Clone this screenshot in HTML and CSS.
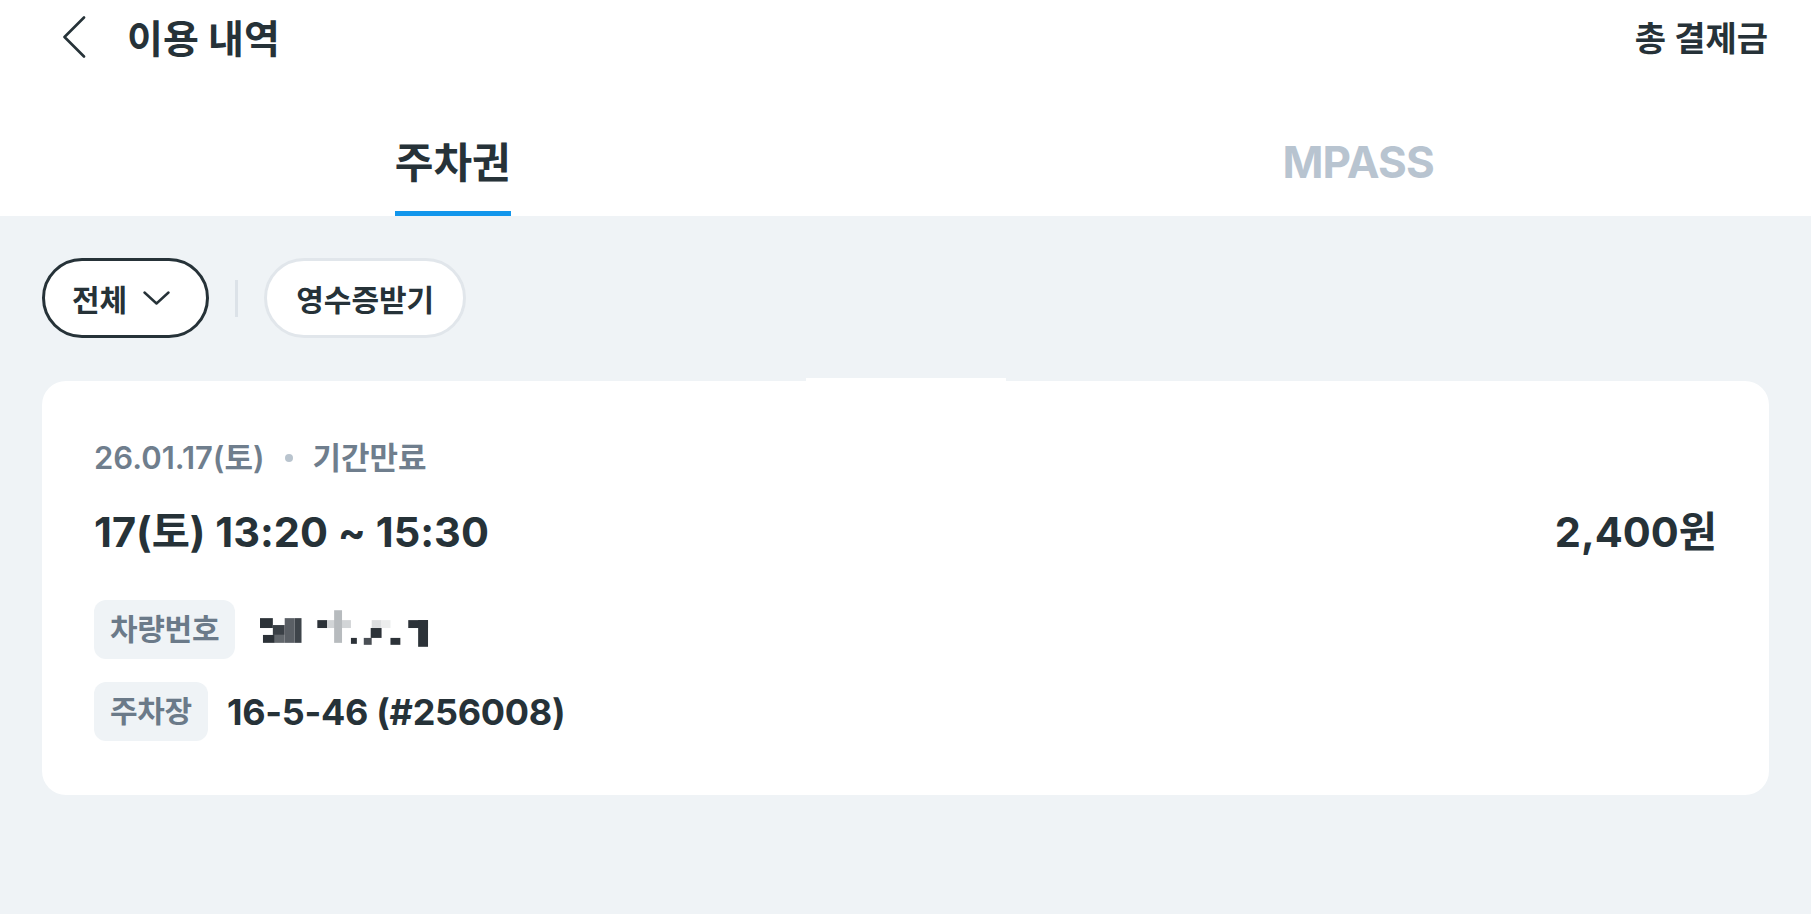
FILE: index.html
```html
<!DOCTYPE html>
<html lang="ko">
<head>
<meta charset="utf-8">
<title>이용 내역</title>
<link rel="stylesheet" href="styles.css">
</head>
<body>
<div class="app">
  <header class="topbar">
    <div class="topbar-left">
      <button class="back" aria-label="뒤로">
        <svg width="24" height="42" viewBox="0 0 24 42"><path d="M22 1.5 L2.5 21 L22 40.5" fill="none" stroke="#263238" stroke-width="2.6" stroke-linecap="round" stroke-linejoin="round"/></svg>
      </button>
      <h1 class="title">이용 내역</h1>
    </div>
    <div class="total">총 결제금</div>
  </header>

  <nav class="tabs">
    <div class="tab active"><span class="tab-label">주차권</span></div>
    <div class="tab"><span class="tab-label latin">MPASS</span></div>
  </nav>

  <main class="content">
    <div class="filters">
      <button class="chip chip-dark">전체
        <svg class="chev" width="27" height="14" viewBox="0 0 27 14"><path d="M1.5 1.5 L13.5 12.5 L25.5 1.5" fill="none" stroke="#263238" stroke-width="2.4" stroke-linecap="round" stroke-linejoin="round"/></svg>
      </button>
      <span class="divider"></span>
      <button class="chip chip-light">영수증받기</button>
    </div>

    <section class="card">
      <div class="notch"></div>
      <div class="meta">26.01.17(토)<span class="dot"></span>기간만료</div>
      <div class="row-main">
        <span class="time">17(토) 13:20 ~ 15:30</span>
        <span class="price">2,400원</span>
      </div>
      <div class="info-row">
        <span class="badge">차량번호</span>
        <svg class="plate" width="170" height="40" viewBox="0 0 172 40" aria-label="차량번호 가림">
          <rect x="0" y="8" width="13" height="10" fill="#2c3238"/>
          <rect x="13" y="15" width="12" height="10" fill="#3a4046"/>
          <rect x="3" y="25" width="12" height="8" fill="#2c3238"/>
          <rect x="15" y="25" width="10" height="8" fill="#62676c"/>
          <rect x="25" y="8" width="10" height="25" fill="#5a5f65"/>
          <rect x="35" y="8" width="7" height="25" fill="#3e444a"/>
          <rect x="58" y="10" width="10" height="8" fill="#2c3238"/>
          <rect x="68" y="10" width="24" height="8" fill="#d2d5d7"/>
          <rect x="75" y="0" width="8" height="33" fill="#b7bbbe"/>
          <rect x="92" y="28" width="6" height="6" fill="#2c3238"/>
          <rect x="105" y="28" width="8" height="7" fill="#4a4f55"/>
          <rect x="113" y="10" width="10" height="8" fill="#dcdedf"/>
          <rect x="112" y="18" width="11" height="10" fill="#2c3238"/>
          <rect x="123" y="10" width="9" height="8" fill="#eceded"/>
          <rect x="132" y="28" width="10" height="7" fill="#2c3238"/>
          <rect x="150" y="10" width="20" height="8" fill="#2c3238"/>
          <rect x="160" y="10" width="10" height="27" fill="#2c3238"/>
        </svg>
      </div>
      <div class="info-row">
        <span class="badge">주차장</span>
        <span class="value">16-5-46 (#256008)</span>
      </div>
    </section>
  </main>
</div>
</body>
</html>
```
FILE: styles.css
```css
* { box-sizing: border-box; }

html, body {
  margin: 0;
  padding: 0;
}

body {
  font-family: Inter, "Noto Sans CJK KR", sans-serif;
  color: #263238;
  background: #eff3f6;
}

.app {
  min-height: 914px;
  display: flex;
  flex-direction: column;
}

.topbar {
  height: 78px;
  background: #fff;
  display: flex;
  align-items: center;
  justify-content: space-between;
  padding: 0 43px 0 62px;
}

.topbar-left {
  display: flex;
  align-items: center;
}

.back {
  border: 0;
  background: none;
  padding: 0;
  margin: -4px 0 0 0;
  display: flex;
}

.title {
  margin: 0 0 0 41px;
  font-size: 39px;
  font-weight: 700;
  line-height: 52px;
}

.total {
  font-size: 34px;
  font-weight: 700;
  line-height: 46px;
}

.tabs {
  display: grid;
  grid-template-columns: 1fr 1fr;
  background: #fff;
  height: 138px;
}

.tab {
  display: flex;
  justify-content: center;
  align-items: flex-end;
}

.tab-label {
  font-size: 42px;
  font-weight: 700;
  line-height: 57px;
  padding-bottom: 20px;
  border-bottom: 5px solid transparent;
  color: #b8c4d0;
}

.tab-label.latin {
  font-size: 44px;
  letter-spacing: -0.8px;
}

.tab.active .tab-label {
  color: #263238;
  border-bottom-color: #1296ec;
}

.content {
  flex: 1;
  background: #eff3f6;
  padding: 42px 42px 60px;
}

.filters {
  display: flex;
  align-items: center;
  gap: 26px;
}

.chip {
  height: 80px;
  border-radius: 40px;
  background: #fff;
  font-family: inherit;
  font-size: 30px;
  font-weight: 700;
  color: #263238;
  padding: 0 27px;
  display: flex;
  align-items: center;
}

.chip-dark {
  border: 3px solid #263238;
  padding-right: 36px;
}

.chip-light {
  border: 3px solid #e1e6eb;
  padding: 0 29px;
}

.chev {
  margin-left: 16px;
}

.divider {
  width: 3px;
  height: 37px;
  background: #dce2e8;
}

.card {
  position: relative;
  margin-top: 43px;
  background: #fff;
  border-radius: 24px;
  padding: 57px 52px 54px 52px;
}

.notch {
  position: absolute;
  top: -3px;
  left: 764px;
  width: 200px;
  height: 3px;
  background: #fff;
}

.meta {
  display: flex;
  align-items: center;
  font-size: 31px;
  font-weight: 600;
  line-height: 40px;
  color: #6f7e8d;
}

.dot {
  width: 8px;
  height: 8px;
  border-radius: 50%;
  background: #b9c4ce;
  margin: 0 20px 0 20px;
}

.row-main {
  margin-top: 29px;
  display: flex;
  justify-content: space-between;
  align-items: center;
  font-size: 41.5px;
  font-weight: 700;
  line-height: 50px;
}

.info-row {
  display: flex;
  align-items: center;
  gap: 19px;
  margin-top: 23px;
}

.row-main + .info-row {
  margin-top: 43px;
}

.badge {
  background: #eff3f6;
  border-radius: 12px;
  padding: 10px 16px;
  font-size: 30px;
  font-weight: 700;
  line-height: 39px;
  color: #6b7a89;
  letter-spacing: -0.3px;
}

.plate {
  margin-left: 6px;
}

.value {
  font-size: 36px;
  font-weight: 700;
  line-height: 46px;
  letter-spacing: -0.3px;
}
```
